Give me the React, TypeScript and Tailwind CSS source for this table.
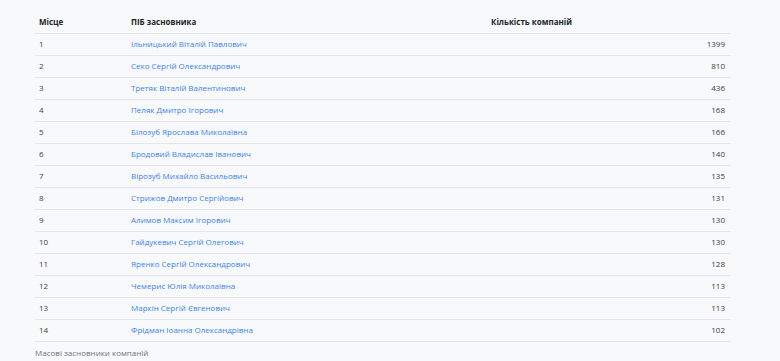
const rows: [number, string, number][] = [
  [1, 'Ільницький Віталій Павлович', 1399],
  [2, 'Секо Сергій Олександрович', 810],
  [3, 'Третяк Віталій Валентинович', 436],
  [4, 'Пеляк Дмитро Ігорович', 168],
  [5, 'Білозуб Ярослава Миколаївна', 166],
  [6, 'Бродовий Владислав Іванович', 140],
  [7, 'Вірозуб Михайло Васильович', 135],
  [8, 'Стрижов Дмитро Сергійович', 131],
  [9, 'Алимов Максим Ігорович', 130],
  [10, 'Гайдукевич Сергій Олегович', 130],
  [11, 'Яренко Сергій Олександрович', 128],
  [12, 'Чемерис Юлія Миколаївна', 113],
  [13, 'Маркін Сергій Євгенович', 113],
  [14, 'Фрідман Іоанна Олександрівна', 102],
];

export default function App() {
  return (
    <div
      className="w-[780px] h-[361px] overflow-hidden bg-[#f8f9fa] text-[#212529] text-[8px]"
      style={{ fontFamily: '"Open Sans", "Noto Sans", sans-serif' }}
    >
      <div className="pl-[35px] pr-[49px] pt-[11px]">
        <table className="w-full border-collapse">
          <thead>
            <tr className="h-[22px] border-b border-[#e5e7ea]">
              <th className="w-[92px] px-1 text-left font-bold">Місце</th>
              <th className="w-[360px] px-1 text-left font-bold">ПІБ засновника</th>
              <th className="px-1 text-left font-bold">Кількість компаній</th>
            </tr>
          </thead>
          <tbody>
            {rows.map(([n, name, count]) => (
              <tr key={n} className="h-[22px] border-b border-[#e5e7ea]">
                <td className="px-1 text-[#3a3f44]">{n}</td>
                <td className="px-1">
                  <a href="#" className="text-[#3b82f6]">
                    {name}
                  </a>
                </td>
                <td className="px-1 pr-[6px] text-right text-[#3a3f44]">{count}</td>
              </tr>
            ))}
          </tbody>
        </table>
        <p className="mt-[5px] text-[#6c757d]">Масові засновники компаній</p>
      </div>
    </div>
  );
}
